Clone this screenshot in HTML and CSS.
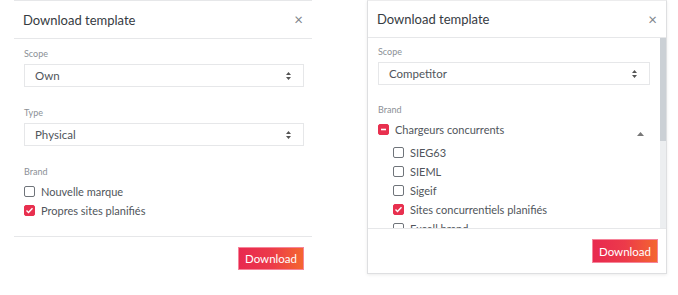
FILE: index.html
```html
<!DOCTYPE html>
<html lang="en">
<head>
    <meta charset="UTF-8">
    <title>Download template</title>
    <link rel="stylesheet" href="styles.css">
</head>
<body>
    <div class="modal modal-flat">
        <div class="modal-header">
            <h2>Download template</h2>
            <span class="close">&times;</span>
        </div>
        <div class="modal-body">
            <div class="field">
                <label>Scope</label>
                <div class="select">
                    <span>Own</span>
                    <svg class="arrows" width="5" height="8" viewBox="0 0 5 8"><path d="M2.5 0L5 3H0z M2.5 8L0 5h5z" fill="#555"/></svg>
                </div>
            </div>
            <div class="field">
                <label>Type</label>
                <div class="select">
                    <span>Physical</span>
                    <svg class="arrows" width="5" height="8" viewBox="0 0 5 8"><path d="M2.5 0L5 3H0z M2.5 8L0 5h5z" fill="#555"/></svg>
                </div>
            </div>
            <div class="field">
                <label>Brand</label>
                <div class="check-row"><span class="box"></span>Nouvelle marque</div>
                <div class="check-row"><span class="box checked"><svg width="9" height="9" viewBox="0 0 9 9"><path d="M1.5 4.6l2 2 4-4.3" fill="none" stroke="#fff" stroke-width="1.4"/></svg></span>Propres sites planifiés</div>
            </div>
        </div>
        <div class="modal-footer">
            <button class="btn">Download</button>
        </div>
    </div>

    <div class="modal modal-card">
        <div class="modal-header">
            <h2>Download template</h2>
            <span class="close">&times;</span>
        </div>
        <div class="scroll-wrap">
            <div class="modal-body scroll">
                <div class="field">
                    <label>Scope</label>
                    <div class="select">
                        <span>Competitor</span>
                        <svg class="arrows" width="5" height="8" viewBox="0 0 5 8"><path d="M2.5 0L5 3H0z M2.5 8L0 5h5z" fill="#555"/></svg>
                    </div>
                </div>
                <div class="field">
                    <label>Brand</label>
                    <div class="group-row">
                        <div class="check-row"><span class="box checked"><svg width="9" height="9" viewBox="0 0 9 9"><path d="M2 4.5h5" stroke="#fff" stroke-width="1.6"/></svg></span>Chargeurs concurrents</div>
                        <svg class="caret" width="7" height="4" viewBox="0 0 7 4"><path d="M3.5 0L7 4H0z" fill="#777"/></svg>
                    </div>
                    <div class="sub-list">
                        <div class="check-row"><span class="box"></span>SIEG63</div>
                        <div class="check-row"><span class="box"></span>SIEML</div>
                        <div class="check-row"><span class="box"></span>Sigeif</div>
                        <div class="check-row"><span class="box checked"><svg width="9" height="9" viewBox="0 0 9 9"><path d="M1.5 4.6l2 2 4-4.3" fill="none" stroke="#fff" stroke-width="1.4"/></svg></span>Sites concurrentiels planifiés</div>
                        <div class="check-row"><span class="box"></span>Excell brand</div>
                    </div>
                </div>
            </div>
            <div class="scrollbar"><div class="thumb"></div></div>
        </div>
        <div class="modal-footer">
            <button class="btn">Download</button>
        </div>
    </div>
</body>
</html>
```

FILE: styles.css
```css
:root {
    --text-primary: #363b42;
    --text-option: #50555b;
    --text-label: #8b9096;
    --border: #e6e7e9;
    --accent: #e8304f;
}

* {
    margin: 0;
    padding: 0;
    box-sizing: border-box;
}

body {
    font-family: 'Lato', 'Open Sans', sans-serif;
    background: #ffffff;
    color: var(--text-primary);
    display: flex;
    align-items: flex-start;
    gap: 55px;
    padding-left: 14px;
}

.modal {
    background: #ffffff;
    display: flex;
    flex-direction: column;
}

.modal-flat {
    width: 298px;
    border-top: 1px solid var(--border);
}

.modal-card {
    width: 300px;
    border: 1px solid #dedfe1;
    border-top-color: #ececed;
    box-shadow: 0 1px 3px rgba(0,0,0,0.08);
}

.modal-header {
    height: 38px;
    display: flex;
    align-items: center;
    justify-content: space-between;
    padding: 0 9px;
    border-bottom: 1px solid var(--border);
}

.modal-card .modal-header {
    height: 37px;
}

.modal-header h2 {
    font-size: 13px;
    font-weight: 400;
    color: var(--text-primary);
}

.close {
    font-size: 15px;
    color: #80858b;
    line-height: 1;
}

.modal-body {
    padding: 9px 8px 16px 10px;
    display: flex;
    flex-direction: column;
    gap: 20px;
}

.scroll-wrap {
    display: flex;
    height: 190px;
}

.modal-body.scroll {
    flex: 1;
    overflow: hidden;
    padding: 8px 10px 10px 10px;
    gap: 19px;
}

.scrollbar {
    width: 6px;
    background: #eceef0;
}

.thumb {
    height: 103px;
    background: #cbd0d5;
}

.field label {
    display: block;
    font-size: 9px;
    line-height: 12px;
    color: var(--text-label);
    margin-bottom: 4px;
}

.select {
    height: 23px;
    border: 1px solid var(--border);
    display: flex;
    align-items: center;
    justify-content: space-between;
    padding: 0 12px 0 10px;
    font-size: 11.5px;
    color: var(--text-option);
}

.check-row {
    display: flex;
    align-items: center;
    gap: 6px;
    height: 19px;
    font-size: 11px;
    color: var(--text-option);
}

.field label + .check-row,
.field label + .group-row {
    margin-top: 2px;
}

.box {
    width: 11px;
    height: 11px;
    border: 1.5px solid #6f747a;
    border-radius: 2px;
    display: flex;
    align-items: center;
    justify-content: center;
    flex-shrink: 0;
}

.box.checked {
    background: var(--accent);
    border-color: var(--accent);
}

.group-row {
    display: flex;
    align-items: center;
    justify-content: space-between;
    padding-right: 6px;
    margin-bottom: 4px;
}

.caret {
    margin-top: 8px;
}

.sub-list {
    padding-left: 15px;
    display: flex;
    flex-direction: column;
}

.modal-footer {
    border-top: 1px solid var(--border);
    display: flex;
    justify-content: flex-end;
    padding: 10px 8px 10px 0;
}

.btn {
    width: 66px;
    height: 23px;
    border: 1px solid #f6849a;
    background: linear-gradient(90deg, #e8294f 0%, #ec3a4a 50%, #f4662f 100%);
    color: #ffffff;
    font-family: inherit;
    font-size: 11.5px;
    cursor: pointer;
}

.modal-card .btn {
    height: 24px;
}
```
